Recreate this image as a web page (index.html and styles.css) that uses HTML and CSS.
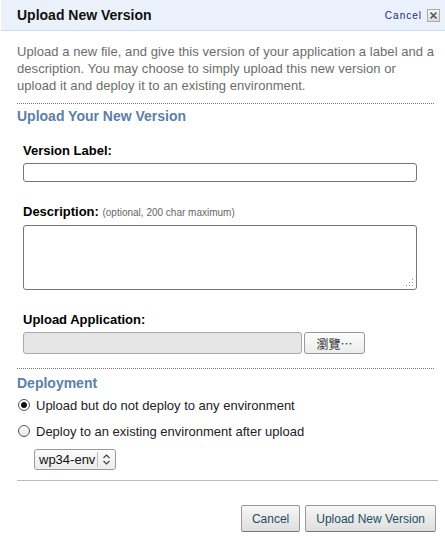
FILE: index.html
```html
<!DOCTYPE html>
<html lang="en">
  <head>
    <meta charset="UTF-8" />
    <meta name="viewport" content="width=device-width, initial-scale=1.0" />
    <title>Upload New Version</title>
    <link rel="stylesheet" href="styles.css">
  </head>
  <body>
    <div class="dialog">
      <div class="header">
        <h1>Upload New Version</h1>
        <div class="close">
          <a href="#">Cancel</a>
          <span class="xbox">
            <svg width="9" height="9" viewBox="0 0 9 9"><path d="M1.5 1.5 L7.5 7.5 M7.5 1.5 L1.5 7.5" stroke="#555" stroke-width="1.6"/></svg>
          </span>
        </div>
      </div>

      <div class="content">
        <p class="intro">Upload a new file, and give this version of your application a label and a description. You may choose to simply upload this new version or upload it and deploy it to an existing environment.</p>
        <div class="dots"></div>

        <h2>Upload Your New Version</h2>
        <form action="">
          <div class="field first">
            <label for="vlabel">Version Label:</label>
            <input type="text" id="vlabel" name="vlabel" />
          </div>
          <div class="field">
            <label for="desc">Description: <span class="hint">(optional, 200 char maximum)</span></label>
            <div class="area">
              <textarea id="desc" name="desc"></textarea>
              <svg class="grip" width="8" height="8" viewBox="0 0 8 8">
                <g fill="#999">
                  <rect x="6" y="0" width="1" height="1"/>
                  <rect x="3" y="3" width="1" height="1"/><rect x="6" y="3" width="1" height="1"/>
                  <rect x="0" y="6" width="1" height="1"/><rect x="3" y="6" width="1" height="1"/><rect x="6" y="6" width="1" height="1"/>
                </g>
              </svg>
            </div>
          </div>
          <div class="field">
            <label>Upload Application:</label>
            <div class="file">
              <div class="filebox"></div>
              <button type="button" class="browse">瀏覽…</button>
            </div>
          </div>
        </form>
        <div class="dots lower"></div>

        <h2 class="deploy">Deployment</h2>
        <label class="radio"><input type="radio" name="dep" checked /> Upload but do not deploy to any environment</label>
        <label class="radio"><input type="radio" name="dep" /> Deploy to an existing environment after upload</label>
        <div class="select">
          <span class="value">wp34-env</span>
          <span class="arrows">
            <svg width="9" height="11" viewBox="0 0 9 11"><path d="M1.5 4 L4.5 1 L7.5 4 M1.5 7 L4.5 10 L7.5 7" fill="none" stroke="#444" stroke-width="1.2"/></svg>
          </span>
        </div>

        <div class="rule"></div>
        <div class="buttons">
          <button type="button" class="btn">Cancel</button>
          <button type="button" class="btn">Upload New Version</button>
        </div>
      </div>
    </div>
  </body>
</html>
```

FILE: styles.css
```css
* {
  margin: 0;
  padding: 0;
  box-sizing: border-box;
}
body {
  font-family: "Liberation Sans", Arial, sans-serif;
  background: #fff;
  color: #000;
}
.dialog {
  width: 445px;
}
.header {
  display: flex;
  justify-content: space-between;
  align-items: center;
  height: 31px;
  margin-left: 1px;
  padding: 0 5px 0 16px;
  background: #eaf1fb;
  border-bottom: 1px solid #c8dcf3;
}
.header h1 {
  font-size: 14px;
  font-weight: bold;
  color: #111;
}
.close {
  display: flex;
  align-items: center;
  gap: 5px;
}
.close a {
  font-size: 10px;
  letter-spacing: 1px;
  color: #1c2a7e;
  text-decoration: none;
}
.xbox {
  display: flex;
  justify-content: center;
  align-items: center;
  width: 13px;
  height: 13px;
  border: 1px solid #aaa;
  background: linear-gradient(#f6f6f6, #dcdcdc);
}
.content {
  padding: 0 9px 0 17px;
}
.intro {
  width: 419px;
  margin-top: 12px;
  font-size: 13px;
  line-height: 17px;
  letter-spacing: 0.06px;
  color: #6c6c6c;
}
.dots {
  margin: 9px 2px 0 0;
  border-top: 1px dotted #777;
}
.dots.lower {
  margin-top: 14px;
}
h2 {
  margin-top: 3px;
  font-size: 14px;
  line-height: 18px;
  color: #5b7fa8;
}
h2.deploy {
  margin-top: 5px;
}
.field {
  margin: 22px 0 0 6px;
}
.field.first {
  margin-top: 18px;
}
.field label {
  display: block;
  font-size: 13px;
  line-height: 16px;
  font-weight: bold;
  margin-bottom: 4px;
}
.hint {
  font-size: 10px;
  font-weight: normal;
  color: #666;
}
.field input {
  display: block;
  width: 394px;
  height: 19px;
  border: 1px solid #777;
  border-radius: 3px;
  outline: none;
}
.area {
  position: relative;
  width: 394px;
}
.area textarea {
  display: block;
  width: 394px;
  height: 65px;
  border: 1px solid #777;
  border-radius: 3px;
  resize: none;
  outline: none;
}
.grip {
  position: absolute;
  right: 3px;
  bottom: 3px;
}
.file {
  display: flex;
  gap: 2px;
}
.filebox {
  width: 279px;
  height: 22px;
  background: #e6e6e6;
  border: 1px solid #aaa;
  border-radius: 3px;
}
.browse {
  width: 61px;
  height: 22px;
  font-family: "Noto Sans CJK TC", sans-serif;
  font-size: 12px;
  color: #333;
  background: linear-gradient(#fdfdfd, #ececec);
  border: 1px solid #999;
  border-radius: 3px;
}
.radio {
  display: flex;
  align-items: center;
  gap: 6px;
  height: 26px;
  font-size: 13px;
  color: #222;
}
.radio input {
  appearance: none;
  width: 12px;
  height: 12px;
  margin-left: 1px;
  border: 1px solid #555;
  border-radius: 50%;
  background: linear-gradient(#fff, #e4e4e4);
}
.radio input:checked {
  background: radial-gradient(circle, #111 0 2.5px, #fff 3.5px);
}
.select {
  display: flex;
  align-items: center;
  width: 82px;
  height: 21px;
  margin: 5px 0 0 17px;
  border: 1px solid #999;
  border-radius: 3px;
  background: linear-gradient(#fbfbfb, #ececec);
}
.select .value {
  width: 63px;
  padding-left: 4px;
  font-size: 13px;
  line-height: 15px;
  color: #111;
  border-right: 1px solid #bbb;
}
.arrows {
  display: flex;
  justify-content: center;
  flex: 1;
}
.rule {
  margin: 10px -2px 0 0;
  border-top: 1px solid #bbb;
}
.buttons {
  display: flex;
  justify-content: flex-end;
  gap: 5px;
  margin-top: 24px;
}
.btn {
  height: 27px;
  padding: 0 10px;
  font-family: "Liberation Sans", Arial, sans-serif;
  font-size: 12px;
  color: #1d4f63;
  background: linear-gradient(#f7f7f7, #dedede);
  border: 1px solid #999;
  border-bottom-color: #777;
  border-radius: 2px;
  cursor: pointer;
}
```
